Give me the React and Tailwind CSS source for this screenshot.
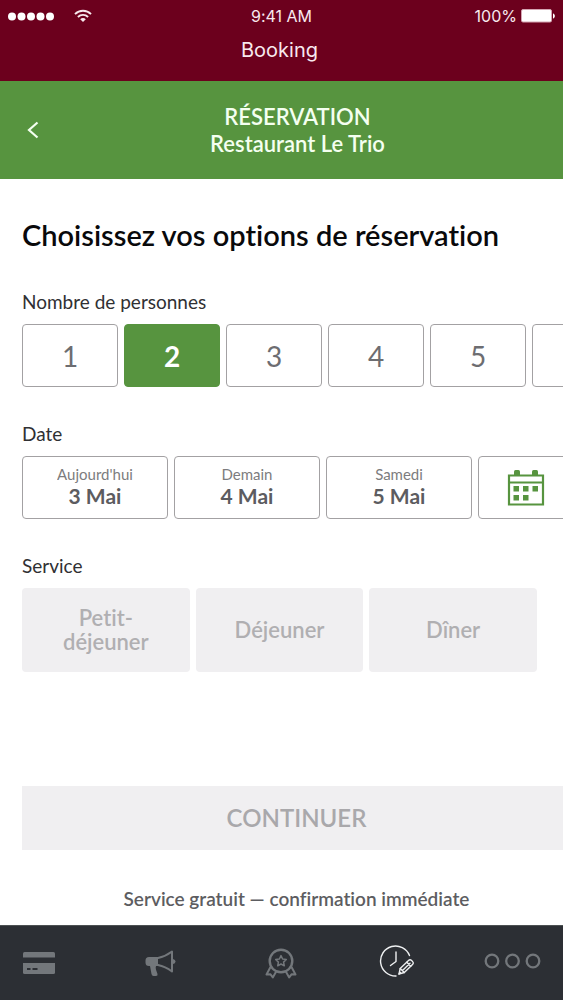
import React, { useState } from "react";

const PEOPLE = [1, 2, 3, 4, 5];
const DATES = [
  { day: "Aujourd'hui", date: "3 Mai" },
  { day: "Demain", date: "4 Mai" },
  { day: "Samedi", date: "5 Mai" },
];
const SERVICES = ["Petit-déjeuner", "Déjeuner", "Dîner"];

function StatusBar() {
  return (
    <div className="grid h-8 grid-cols-3 items-center pl-2 pr-2 text-base leading-5">
      <div className="flex items-center gap-5">
        <svg width="46" height="9" viewBox="0 0 46 9" fill="#fff" aria-hidden="true">
          <circle cx="4" cy="4.5" r="4" />
          <circle cx="13.5" cy="4.5" r="4" />
          <circle cx="23" cy="4.5" r="4" />
          <circle cx="32.5" cy="4.5" r="4" />
          <circle cx="42" cy="4.5" r="4" />
        </svg>
        <svg width="18" height="14" viewBox="0 0 18 14" fill="none" stroke="currentColor" strokeWidth="1.9" aria-hidden="true">
          <path d="M1 5.1C5.4 0.7 12.6 0.7 17 5.1" />
          <path d="M3.9 8C6.8 5.2 11.2 5.2 14.1 8" />
          <path d="M9 13L6.2 10.2C7.8 8.7 10.2 8.7 11.8 10.2Z" fill="currentColor" stroke="none" />
        </svg>
      </div>
      <span className="text-center">9:41 AM</span>
      <div className="flex items-center justify-end gap-1">
        <span>100%</span>
        <svg width="34" height="14" viewBox="0 0 34 14" aria-hidden="true">
          <rect x="0.5" y="0.5" width="30" height="12.5" rx="1.5" fill="#fff" stroke="#d3a5b2" />
          <path d="M32 4.5C34.5 5 34.5 9 32 9.5Z" fill="#fff" />
        </svg>
      </div>
    </div>
  );
}

function CalendarIcon() {
  return (
    <svg width="38" height="38" viewBox="0 0 38 38" fill="none" aria-hidden="true">
      <path d="M2 6.5H36V35.5H2Z M2 13.5H36" stroke="#57943f" strokeWidth="2.2" />
      <g fill="#57943f">
        <rect x="7" y="1" width="6" height="6" rx="1.5" />
        <rect x="25" y="1" width="6" height="6" rx="1.5" />
        <rect x="6.500" y="17" width="5.500" height="5.500" />
        <rect x="16" y="17" width="5.500" height="5.500" />
        <rect x="25.500" y="17" width="5.500" height="5.500" />
        <rect x="6.500" y="26" width="5.500" height="5.500" />
        <rect x="16" y="26" width="5.500" height="5.500" />
      </g>
    </svg>
  );
}

function CardIcon() {
  return (
    <svg width="32" height="22" viewBox="0 0 32 22" aria-hidden="true">
      <path d="M0 5.500V1.500Q0 0 1.500 0H30.500Q32 0 32 1.500V5.500Z" fill="#73777b" />
      <path d="M0 11H32V20.500Q32 22 30.500 22H1.500Q0 22 0 20.500Z" fill="#73777b" />
      <path d="M4 17H7.500M9.500 17H14.500" stroke="#2c2f34" strokeWidth="1.800" />
    </svg>
  );
}

function MegaphoneIcon() {
  return (
    <svg width="31" height="27" viewBox="0 0 31 27" aria-hidden="true">
      <path d="M4 7H13V16H11C10 18 11.500 21 12.500 24Q13 26 11 26H8.500Q7 26 6.500 24L5 16H4Q0.500 16 0.500 12.500V10.500Q0.500 7 4 7Z" fill="#73777b" />
      <path d="M13 8C18 7 23 4.500 27 1.500V21.500C23 18.500 18 16 13 15" fill="none" stroke="#73777b" strokeWidth="2" strokeLinejoin="round" strokeLinecap="round" />
      <path d="M28 9Q30.500 9.500 30.500 11.500T28 14Z" fill="#73777b" />
    </svg>
  );
}

function AwardIcon() {
  return (
    <svg width="32" height="31" viewBox="0 0 32 31" fill="none" stroke="#73777b" strokeLinejoin="round" aria-hidden="true">
      <circle cx="16" cy="13" r="11.300" strokeWidth="2.400" />
      <path d="M16 7.600L17.600 11L21.300 11.500L18.600 14.100L19.300 17.800L16 16L12.700 17.800L13.400 14.100L10.700 11.500L14.400 11Z" strokeWidth="1.500" />
      <path d="M5.500 19L1.500 26.500L5.500 26.300L7.800 29.500L11.200 23.500" strokeWidth="2" />
      <path d="M26.500 19L30.500 26.500L26.500 26.300L24.200 29.500L20.800 23.500" strokeWidth="2" />
    </svg>
  );
}

function BookingIcon() {
  return (
    <svg width="36" height="33" viewBox="0 0 36 33" fill="none" stroke="#eef0f1" strokeWidth="1.400" strokeLinecap="round" strokeLinejoin="round" aria-hidden="true">
      <path d="M30.500 10.500A15 15 0 1 0 17 31" />
      <path d="M17 7V16.500L11.500 20.500" />
      <path d="M20 29L21.200 23.500L29.500 15.500Q31 14 32.600 15.500L33.600 16.600Q35 18.100 33.500 19.500L25.300 27.500Z" />
      <path d="M21.200 23.500L25.300 27.500M23.500 25.500L31 18.200M27.800 17.200L31.800 21.200M20 29L21.500 27.500" />
    </svg>
  );
}

function MoreIcon() {
  return (
    <svg width="57" height="16" viewBox="0 0 57 16" fill="none" stroke="#73777b" strokeWidth="2.300" aria-hidden="true">
      <circle cx="8" cy="8" r="6.300" />
      <circle cx="28.500" cy="8" r="6.300" />
      <circle cx="49" cy="8" r="6.300" />
    </svg>
  );
}

function Group({ label, children }) {
  return (
    <section className="flex flex-col gap-2.5" aria-label={label}>
      <h3 className="px-[22px] text-[19px] leading-6 text-[#303033]">{label}</h3>
      {children}
    </section>
  );
}

const scroller = "flex gap-1.5 overflow-x-auto pl-[22px] [scrollbar-width:none]";
const tile = "h-[63px] shrink-0 rounded border ";
const idle = "border-[#a3a1a3] bg-white text-[#5c5c60]";
const active = "border-[#57943f] bg-[#57943f] text-white";

export default function App() {
  const [people, setPeople] = useState(2);
  const [date, setDate] = useState(null);

  return (
    <div className="flex min-h-screen flex-col overflow-hidden bg-white font-['Lato',sans-serif] [font-variant-ligatures:none]">
      <header className="h-[81px] bg-[#6c001d] font-['Inter',sans-serif] text-[#f8e9ee]">
        <StatusBar />
        <h1 className="pr-1 text-center text-xl leading-9">Booking</h1>
      </header>

      <div className="grid h-[98px] grid-cols-[66px_1fr_34px] items-center bg-[#57943f] text-[#f4fff0]">
        <button type="button" aria-label="Retour" className="flex h-12 items-center justify-center">
          <svg width="12" height="18" viewBox="0 0 12 18" fill="none" stroke="currentColor" strokeWidth="2.200" aria-hidden="true">
            <path d="M10.500 1.500L2 9L10.500 16.500" />
          </svg>
        </button>
        <div className="text-center text-[22px] font-semibold leading-[27px]">
          <p>RÉSERVATION</p>
          <p>Restaurant Le Trio</p>
        </div>
      </div>

      <main className="flex flex-col pt-[38px]">
        <h2 className="px-[22px] text-[29px] font-semibold leading-9 text-[#09090b]">
          Choisissez vos options de réservation
        </h2>

        <div className="mt-[37px] flex flex-col gap-[35px]">
          <Group label="Nombre de personnes">
            <div className={scroller}>
              {PEOPLE.map((n) => (
                <button
                  key={n}
                  type="button"
                  aria-pressed={people === n}
                  onClick={() => setPeople(n)}
                  className={tile + "w-24 text-[28px] leading-8 " + (people === n ? active + " font-bold" : "border-[#a3a1a3] bg-white text-[#6d6d71]")}
                >
                  {n}
                </button>
              ))}
              <button
                type="button"
                aria-label="Plus de 5 personnes"
                aria-pressed={people === 6}
                onClick={() => setPeople(6)}
                className={tile + "w-24 " + (people === 6 ? active : idle)}
              />
            </div>
          </Group>

          <Group label="Date">
            <div className={scroller}>
              {DATES.map((d) => (
                <button
                  key={d.date}
                  type="button"
                  aria-pressed={date === d.date}
                  onClick={() => setDate(d.date)}
                  className={tile + "w-[146px] pb-1 " + (date === d.date ? active : idle)}
                >
                  <span className="block text-[15px] leading-5 opacity-80">{d.day}</span>
                  <span className="block text-[21px] font-bold leading-6">{d.date}</span>
                </button>
              ))}
              <button type="button" aria-label="Choisir une date" className={tile + "flex w-24 items-center justify-center " + idle}>
                <CalendarIcon />
              </button>
            </div>
          </Group>

          <Group label="Service">
            <div className="grid grid-cols-3 gap-1.5 pl-[22px] pr-[26px]">
              {SERVICES.map((s) => (
                <button
                  key={s}
                  type="button"
                  disabled
                  className="h-[84px] rounded bg-[#f0eff1] px-8 text-[22px] font-semibold leading-6 text-[#b0afb2]"
                >
                  {s}
                </button>
              ))}
            </div>
          </Group>
        </div>

        <div className="-mr-2 ml-[22px] mt-[114px] text-center">
          <button type="button" disabled className="h-16 w-full bg-[#f0eff1] text-2xl font-semibold text-[#a9a8ab]">
            CONTINUER
          </button>
          <p className="mt-[37px] text-[19px] font-semibold leading-6 text-[#5d5d61]">
            Service gratuit — confirmation immédiate
          </p>
        </div>
      </main>

      <nav className="mt-auto grid h-[75px] grid-cols-[122fr_120fr_114fr_105fr_57px] items-center border-t border-[#4c5152] bg-[#2c2f34] pl-[23px] pr-[22px]">
        <a href="#carte" aria-label="Carte"><CardIcon /></a>
        <a href="#actualites" aria-label="Actualités"><MegaphoneIcon /></a>
        <a href="#recompenses" aria-label="Récompenses"><AwardIcon /></a>
        <a href="#reservation" aria-label="Réservation" aria-current="page" className="pb-1"><BookingIcon /></a>
        <a href="#plus" aria-label="Plus" className="pb-1"><MoreIcon /></a>
      </nav>
    </div>
  );
}
